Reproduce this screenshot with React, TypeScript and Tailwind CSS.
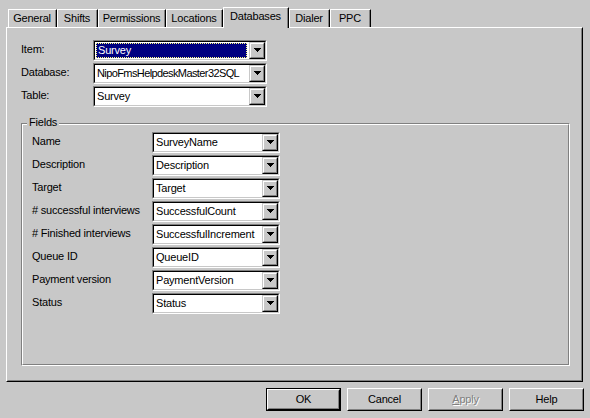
import React from "react";

function Arrow() {
  return (
    <svg width="7" height="4" viewBox="0 0 7 4" shapeRendering="crispEdges">
      <rect x="0" y="0" width="7" height="1" fill="#000" />
      <rect x="1" y="1" width="5" height="1" fill="#000" />
      <rect x="2" y="2" width="3" height="1" fill="#000" />
      <rect x="3" y="3" width="1" height="1" fill="#000" />
    </svg>
  );
}

function DropBtn() {
  return (
    <div className="w-[16px] h-full shrink-0 border border-t-[#c8c8c8] border-l-[#c8c8c8] border-b-black border-r-black">
      <div className="w-full h-full border border-t-white border-l-white border-b-[#808080] border-r-[#808080] bg-[#c8c8c8] flex items-center justify-center pb-[1px]">
        <Arrow />
      </div>
    </div>
  );
}

function Combo({ value, w, selected, tight }: { value: string; w: string; selected?: boolean; tight?: boolean }) {
  return (
    <div className={`${w} h-[21px] shrink-0 border border-t-[#808080] border-l-[#808080] border-b-white border-r-white`}>
      <div className="w-full h-full border border-t-black border-l-black border-b-[#c8c8c8] border-r-[#c8c8c8] bg-white flex">
        <div className="flex-1 min-w-0 flex items-stretch overflow-hidden">
          {selected ? (
            <div className="flex-1 m-[1px] mr-[2px] bg-[#000080] border border-dotted border-[#ffff80] text-white flex items-center pl-[1px] leading-[13px] whitespace-nowrap">
              {value}
            </div>
          ) : (
            <div
              className={`flex-1 flex items-center pl-[2px] leading-[13px] whitespace-nowrap overflow-hidden ${
                tight ? "tracking-[-0.6px]" : ""
              }`}
            >
              {value}
            </div>
          )}
        </div>
        <DropBtn />
      </div>
    </div>
  );
}

function Tab({ label, w, selected }: { label: string; w: string; selected?: boolean }) {
  if (selected) {
    return (
      <div className={`${w} h-[21px] mb-[-1px] relative z-10 shrink-0 bg-[#c8c8c8] border-l border-t border-r border-l-white border-t-white border-r-black`}>
        <div className="w-full h-full border-r border-r-[#808080] flex justify-center pt-[2px] leading-[13px]">
          {label}
        </div>
      </div>
    );
  }
  return (
    <div className={`${w} h-[18px] shrink-0 border-l border-t border-r border-l-white border-t-white border-r-black`}>
      <div className="w-full h-full border-r border-r-[#808080] flex justify-center pt-[2px] leading-[13px]">
        {label}
      </div>
    </div>
  );
}

function Button({ label, isDefault, disabled }: { label: React.ReactNode; isDefault?: boolean; disabled?: boolean }) {
  const inner = (
    <div className="w-full h-full border border-t-white border-l-white border-b-black border-r-black">
      <div
        className={`w-full h-full border border-t-[#c8c8c8] border-l-[#c8c8c8] border-b-[#808080] border-r-[#808080] flex items-center justify-center leading-[13px] ${
          disabled ? "text-[#808080] [text-shadow:1px_1px_0_#ffffff]" : "text-black"
        }`}
      >
        {label}
      </div>
    </div>
  );
  if (isDefault) {
    return <div className="w-[75px] h-[23px] border border-black">{inner}</div>;
  }
  return <div className="w-[75px] h-[23px]">{inner}</div>;
}

const fields: [string, string][] = [
  ["Name", "SurveyName"],
  ["Description", "Description"],
  ["Target", "Target"],
  ["# successful interviews", "SuccessfulCount"],
  ["# Finished interviews", "SuccessfulIncrement"],
  ["Queue ID", "QueueID"],
  ["Payment version", "PaymentVersion"],
  ["Status", "Status"],
];

export default function App() {
  return (
    <div className="w-[590px] h-[418px] bg-[#c8c8c8] text-black text-[11px] font-['Liberation_Sans',Arial,sans-serif] tracking-[-0.2px] overflow-hidden pt-[7px]">
      {/* tabs */}
      <div className="flex items-end h-[20px] pl-[8px] relative z-10">
        <Tab label="General" w="w-[49px]" />
        <Tab label="Shifts" w="w-[41px]" />
        <Tab label="Permissions" w="w-[68px]" />
        <Tab label="Locations" w="w-[57px]" />
        <Tab label="Databases" w="w-[66px]" selected />
        <Tab label="Dialer" w="w-[41px]" />
        <Tab label="PPC" w="w-[41px]" />
      </div>

      {/* panel */}
      <div className="ml-[6px] w-[577px] h-[355px] border border-t-white border-l-white border-b-black border-r-black">
        <div className="w-full h-full border border-t-[#c8c8c8] border-l-[#c8c8c8] border-b-[#808080] border-r-[#808080] pl-[13px] pt-[11px]">
          <div className="flex flex-col gap-[2px]">
            <div className="flex h-[21px]">
              <div className="w-[72px] pt-[3px] leading-[13px]">Item:</div>
              <Combo value="Survey" w="w-[174px]" selected />
            </div>
            <div className="flex h-[21px]">
              <div className="w-[72px] pt-[3px] leading-[13px]">Database:</div>
              <Combo value="NipoFmsHelpdeskMaster32SQL" w="w-[174px]" tight />
            </div>
            <div className="flex h-[21px]">
              <div className="w-[72px] pt-[3px] leading-[13px]">Table:</div>
              <Combo value="Survey" w="w-[174px]" />
            </div>
          </div>

          {/* group box */}
          <div className="mt-[16px] w-[549px] h-[243px] relative border border-t-[#808080] border-l-[#808080] border-b-white border-r-white">
            <div className="absolute left-[5px] top-[-8px] px-[2px] bg-[#c8c8c8] leading-[13px]">Fields</div>
            <div className="w-full h-full border border-t-white border-l-white border-b-[#808080] border-r-[#808080] pl-[9px] pt-[7px]">
              <div className="flex flex-col gap-[2px]">
                {fields.map(([label, value]) => (
                  <div key={label} className="flex h-[21px]">
                    <div className="w-[120px] pt-[3px] leading-[13px] whitespace-nowrap">{label}</div>
                    <Combo value={value} w="w-[128px]" />
                  </div>
                ))}
              </div>
            </div>
          </div>
        </div>
      </div>

      {/* buttons */}
      <div className="flex justify-end gap-[6px] pr-[6px] mt-[6px]">
        <Button label="OK" isDefault />
        <Button label="Cancel" />
        <Button
          label={
            <span>
              <span className="underline">A</span>pply
            </span>
          }
          disabled
        />
        <Button label="Help" />
      </div>
    </div>
  );
}
